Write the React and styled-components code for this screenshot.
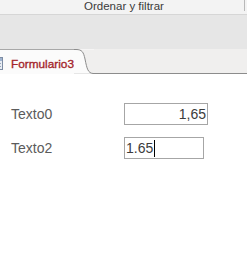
import React from "react";
import styled, { createGlobalStyle } from "styled-components";

const GlobalStyle = createGlobalStyle`
  html, body {
    margin: 0;
    padding: 0;
    background: #ffffff;
    overflow: hidden;
  }
  body {
    font-family: "Liberation Sans", Arial, sans-serif;
  }
`;

const Page = styled.div`
  width: 247px;
  height: 257px;
  display: flex;
  flex-direction: column;
  background: #ffffff;
  overflow: hidden;
`;

const GroupBar = styled.div`
  height: 14px;
  flex: none;
  display: flex;
  align-items: flex-start;
  background: #f3f3f3;
  border-bottom: 1px solid #d6d6d6;
`;

const GroupLabel = styled.div`
  flex: 1;
  text-align: center;
  font-size: 11.5px;
  line-height: 12px;
  padding-left: 4px;
  color: #3b3b3b;
`;

const GroupDivider = styled.div`
  width: 1px;
  height: 11px;
  margin-right: 2px;
  background: #b8b8b8;
`;

const RibbonSpace = styled.div`
  height: 34px;
  flex: none;
  background: #e6e6e6;
`;

const TabStrip = styled.div`
  height: 25px;
  flex: none;
  display: flex;
  background: #e6e6e6;
`;

const Tab = styled.div`
  display: flex;
  align-items: center;
  gap: 8px;
  padding-top: 3px;
  margin-left: -9px;
  background: #fbfbfb;
  border-top: 1px solid #a8a8a8;
  box-sizing: border-box;
`;

const TabTitle = styled.span`
  font-size: 11.8px;
  color: #a4262c;
  -webkit-text-stroke: 0.35px #a4262c;
`;

const TabFiller = styled.div`
  flex: 1;
  background: #f0efee;
  border-bottom: 1px solid #8c8c8c;
  box-sizing: border-box;
`;

const Content = styled.div`
  flex: 1;
  display: grid;
  grid-template-columns: 113px auto;
  grid-auto-rows: 22px;
  row-gap: 12px;
  align-content: start;
  align-items: center;
  padding: 29px 0 0 11px;
  background: #ffffff;
`;

const Label = styled.div`
  font-size: 14px;
  color: #5b5b5b;
  line-height: 16px;
`;

const Field = styled.div`
  width: ${(p) => p.$width}px;
  height: 22px;
  box-sizing: border-box;
  border: 1px solid #a6a6a6;
  display: flex;
  align-items: center;
  justify-content: ${(p) => (p.$right ? "flex-end" : "flex-start")};
  padding: 0 1px;
  font-size: 14px;
  color: #3c3c3c;
  background: #ffffff;
`;

const Caret = styled.span`
  width: 1px;
  height: 17px;
  margin-left: 1px;
  background: #000000;
`;

const FormIcon = () => (
  <svg width="12" height="13" viewBox="0 0 12 13">
    <rect x="0.5" y="0.5" width="11" height="12" fill="#e8edf4" stroke="#7d8ca3" />
    <rect x="1" y="1" width="10" height="3" fill="#9fb3cf" />
    <rect x="2" y="6" width="8" height="1" fill="#9aa6b8" />
    <rect x="2" y="9" width="8" height="1" fill="#9aa6b8" />
  </svg>
);

const TabCurve = () => (
  <svg width="20" height="25" viewBox="0 0 20 25" style={{ flex: "none", display: "block" }}>
    <path d="M0 0 H20 V24 H19 C14 24 13 20 11 10 C9.5 3 8 0.5 2 0.5 H0 Z" fill="#f0efee" />
    <path d="M0 0 H20 V0.5 H2 C8 0.5 9.5 3 11 10 C13 20 14 24 19 24 H0 Z" fill="#fbfbfb" />
    <path d="M0 0.5 H2 C8 0.5 9.5 3 11 10 C13 20 14 24 19 24.5 H20" fill="none" stroke="#8c8c8c" strokeWidth="1" />
  </svg>
);

const App = () => (
  <Page>
    <GlobalStyle />
    <GroupBar>
      <GroupLabel>Ordenar y filtrar</GroupLabel>
      <GroupDivider />
    </GroupBar>
    <RibbonSpace />
    <TabStrip>
      <Tab>
        <FormIcon />
        <TabTitle>Formulario3</TabTitle>
      </Tab>
      <TabCurve />
      <TabFiller />
    </TabStrip>
    <Content>
      <Label>Texto0</Label>
      <Field $width={84} $right>
        1,65
      </Field>
      <Label>Texto2</Label>
      <Field $width={80}>
        1.65
        <Caret />
      </Field>
    </Content>
  </Page>
);

export default App;
